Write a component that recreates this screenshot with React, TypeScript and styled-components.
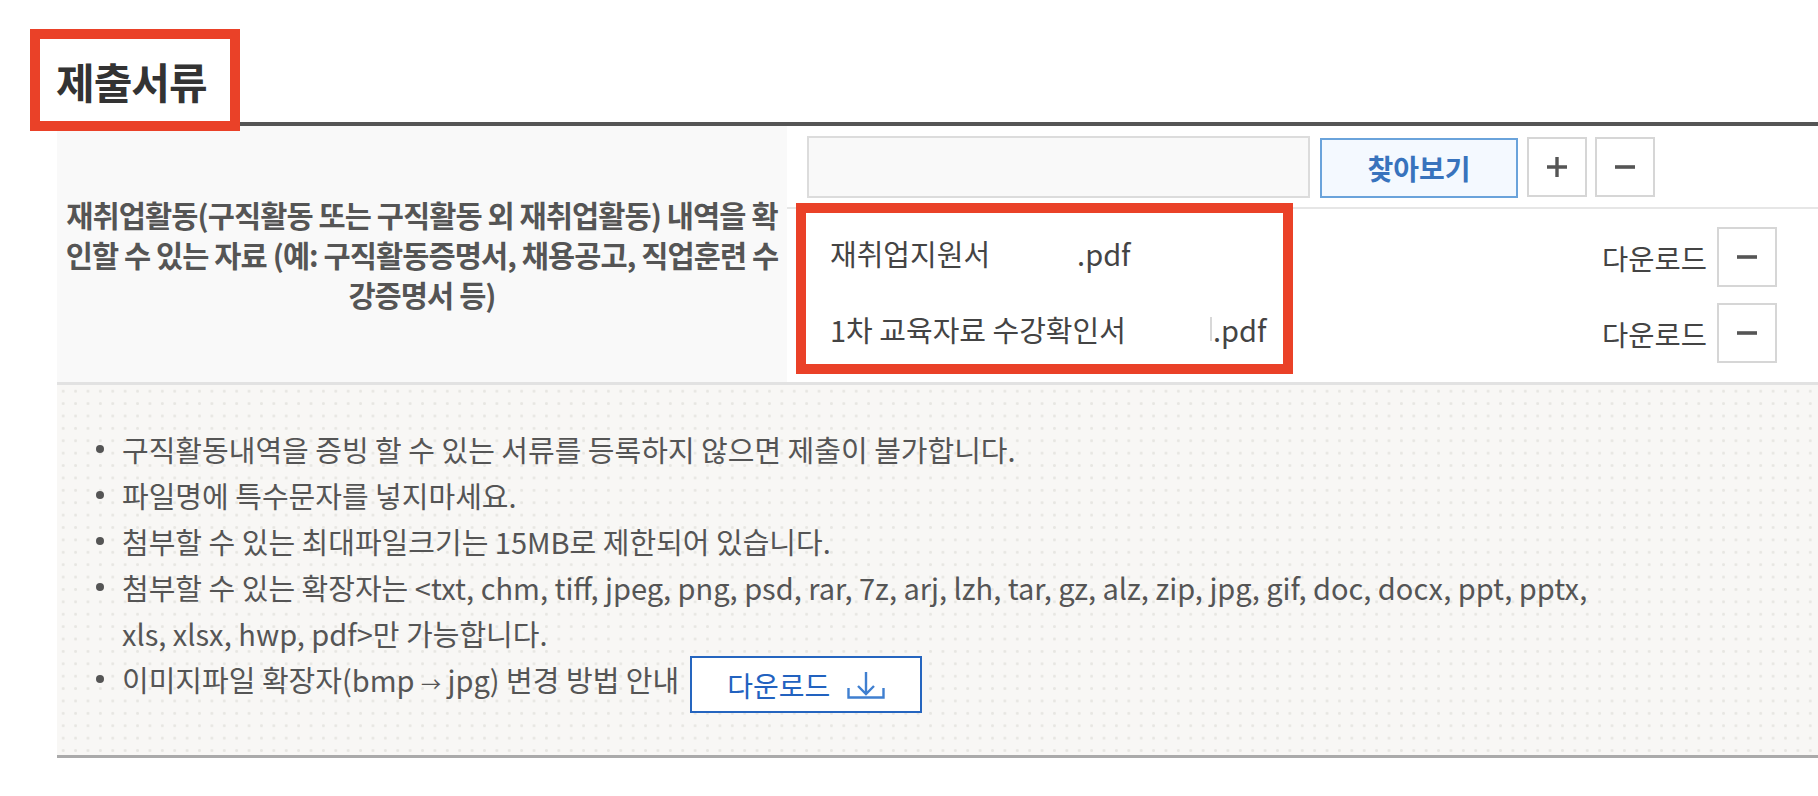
import React from "react";
import styled, { createGlobalStyle } from "styled-components";

const GlobalStyle = createGlobalStyle`
  body {
    margin: 0;
    background: #ffffff;
    font-family: "Noto Sans CJK KR", "Noto Sans", sans-serif;
    color: #555555;
  }
`;

const files = [
  { name: "재취업지원서", mark: false },
  { name: "1차 교육자료 수강확인서", mark: true },
];

const notices = [
  "구직활동내역을 증빙 할 수 있는 서류를 등록하지 않으면 제출이 불가합니다.",
  "파일명에 특수문자를 넣지마세요.",
  "첨부할 수 있는 최대파일크기는 15MB로 제한되어 있습니다.",
  "첨부할 수 있는 확장자는 <txt, chm, tiff, jpeg, png, psd, rar, 7z, arj, lzh, tar, gz, alz, zip, jpg, gif, doc, docx, ppt, pptx, xls, xlsx, hwp, pdf>만 가능합니다.",
];

const PlusIcon = () => (
  <svg width="22" height="22" viewBox="0 0 22 22">
    <path d="M11 1 V21 M1 11 H21" stroke="#555" strokeWidth="3.4" />
  </svg>
);

const MinusIcon = () => (
  <svg width="22" height="22" viewBox="0 0 22 22">
    <path d="M1 11 H21" stroke="#555" strokeWidth="3.6" />
  </svg>
);

const DownloadIcon = () => (
  <svg width="38" height="28" viewBox="0 0 38 28" fill="none">
    <path d="M1.5 17 V26.5 H36.5 V17" stroke="#3f7fd0" strokeWidth="2.4" />
    <path d="M19 1 V23 M11 15 L19 23 L27 15" stroke="#3f7fd0" strokeWidth="2.4" />
  </svg>
);

const App = () => {
  return (
    <>
      <GlobalStyle />
      <Page>
        <Title>제출서류</Title>
        <Table>
          <LabelCell>
            재취업활동(구직활동 또는 구직활동 외 재취업활동) 내역을 확인할 수 있는 자료 (예: 구직활동증명서, 채용공고, 직업훈련 수강증명서 등)
          </LabelCell>
          <FieldCell>
            <UploadRow>
              <FileInput />
              <BrowseButton>찾아보기</BrowseButton>
              <IconButton><PlusIcon /></IconButton>
              <IconButton><MinusIcon /></IconButton>
            </UploadRow>
            <FileList>
              <Highlight />
              {files.map((f) => (
                <FileRow key={f.name}>
                  <FileName>
                    {f.name}
                    <Redacted>{f.mark && <RedactMark />}</Redacted>
                    .pdf
                  </FileName>
                  <FileActions>
                    <DownloadLink>다운로드</DownloadLink>
                    <IconButton><MinusIcon /></IconButton>
                  </FileActions>
                </FileRow>
              ))}
            </FileList>
          </FieldCell>
        </Table>
        <Notice>
          <NoticeList>
            {notices.map((n) => (
              <NoticeItem key={n}>
                <NoticeText>{n}</NoticeText>
              </NoticeItem>
            ))}
            <NoticeItem>
              <NoticeText>
                이미지파일 확장자(bmp <Arrow>→</Arrow> jpg) 변경 방법 안내
                <GuideButton>
                  다운로드
                  <DownloadIcon />
                </GuideButton>
              </NoticeText>
            </NoticeItem>
          </NoticeList>
        </Notice>
      </Page>
    </>
  );
};

const Page = styled.div`
  padding: 29px 0 40px 57px;
`;

const Title = styled.h2`
  position: relative;
  z-index: 2;
  box-sizing: border-box;
  width: 210px;
  height: 102px;
  margin: 0 0 -9px -27px;
  padding: 0 0 0 16px;
  display: flex;
  align-items: center;
  border: 10px solid #ea4128;
  background: #fff;
  font-size: 42px;
  font-weight: 700;
  color: #333;
  letter-spacing: -1px;
`;

const Table = styled.div`
  display: grid;
  grid-template-columns: 730px 1fr;
  border-top: 4px solid #555;
  border-bottom: 3px solid #e2e2e2;
`;

const LabelCell = styled.div`
  display: flex;
  align-items: center;
  justify-content: center;
  text-align: center;
  background: #f9f9f9;
  font-size: 29.5px;
  font-weight: 700;
  line-height: 40px;
  color: #555;
  letter-spacing: -0.9px;
  word-break: break-all;
`;

const FieldCell = styled.div`
  background: #fff;
`;

const UploadRow = styled.div`
  display: flex;
  align-items: center;
  height: 81px;
  padding-left: 20px;
  border-bottom: 2px solid #e6e6e6;
`;

const FileInput = styled.div`
  box-sizing: border-box;
  width: 503px;
  height: 62px;
  border: 2px solid #dcdcdc;
  background: #f9f9f9;
  margin-right: 10px;
`;

const BrowseButton = styled.button`
  box-sizing: border-box;
  width: 198px;
  height: 60px;
  margin: 3px 9px 0 0;
  border: 2px solid #6aa3db;
  background: #f4f9ff;
  color: #3873bd;
  font-family: inherit;
  font-size: 28px;
  font-weight: 700;
`;

const IconButton = styled.button`
  box-sizing: border-box;
  width: 60px;
  height: 60px;
  margin-right: 8px;
  display: flex;
  align-items: center;
  justify-content: center;
  border: 2px solid #d6d6d6;
  background: #fff;
  padding: 0;
  &:last-child {
    margin-right: 0;
  }
`;

const FileList = styled.div`
  position: relative;
  padding: 10px 41px 11px 43px;
`;

const Highlight = styled.div`
  position: absolute;
  left: 9px;
  top: -6px;
  width: 497px;
  height: 171px;
  box-sizing: border-box;
  border: 10px solid #ea4128;
  pointer-events: none;
`;

const FileRow = styled.div`
  display: flex;
  align-items: center;
  justify-content: space-between;
  height: 76px;
`;

const FileName = styled.span`
  display: flex;
  align-items: center;
  margin-top: -8px;
  font-size: 29px;
  color: #444;
`;

const Redacted = styled.span`
  display: inline-flex;
  justify-content: flex-end;
  width: 87px;
`;

const RedactMark = styled.span`
  width: 2px;
  height: 24px;
  margin-right: 1px;
  background: #d8d8d8;
`;

const FileActions = styled.div`
  display: flex;
  align-items: center;
  gap: 10px;
`;

const DownloadLink = styled.span`
  font-size: 28.5px;
  color: #444;
`;

const Notice = styled.div`
  background-color: #f8f7f5;
  background-image: radial-gradient(circle, #e7e6e2 1.2px, transparent 1.6px);
  background-size: 12.4px 12.4px;
  padding: 41px 185px 42px 39px;
  border-bottom: 3px solid #aaa;
`;

const NoticeList = styled.ul`
  list-style: none;
  margin: 0;
  padding: 0;
`;

const NoticeItem = styled.li`
  display: flex;
  align-items: flex-start;
  font-size: 29px;
  line-height: 46px;
  color: #555;
  &::before {
    content: "";
    flex: none;
    width: 8px;
    height: 8px;
    margin: 19px 18px 0 0;
    border-radius: 50%;
    background: #555;
  }
`;

const NoticeText = styled.span`
  display: block;
`;

const Arrow = styled.span`
  font-size: 20px;
`;

const GuideButton = styled.span`
  display: inline-flex;
  align-items: center;
  justify-content: center;
  gap: 17px;
  box-sizing: border-box;
  width: 232px;
  height: 57px;
  margin-left: 11px;
  vertical-align: middle;
  border: 2px solid #2565bf;
  background: #fff;
  color: #2262bf;
  font-size: 28px;
`;

export default App;
